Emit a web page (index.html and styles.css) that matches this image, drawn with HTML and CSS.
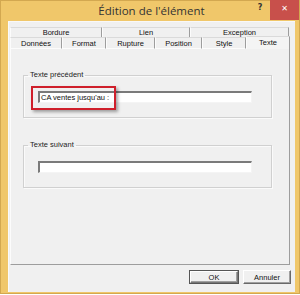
FILE: index.html
```html
<!DOCTYPE html>
<html>
	<head>
		<meta charset="utf-8" />
		<title>Édition de l'élément</title>
		<link rel="stylesheet" href="styles.css">
	</head>
	<body>
		<div class="window">
			<div class="titlebar">
				<span></span>
				<span class="title">Édition de l'élément</span>
				<div class="controls">
					<span class="help">?</span>
					<span class="close">✕</span>
				</div>
			</div>
			<div class="client">
				<!-- onglets -->
				<div class="tabs">
					<div class="row row-back">
						<span class="tab w92">Bordure</span>
						<span class="tab w88">Lien</span>
						<span class="tab w99">Exception</span>
					</div>
					<div class="row row-front">
						<span class="tab w52">Données</span>
						<span class="tab w44">Format</span>
						<span class="tab w49">Rupture</span>
						<span class="tab w47">Position</span>
						<span class="tab w44">Style</span>
						<span class="tab w44 active">Texte</span>
					</div>
				</div>
				<div class="panel">
					<fieldset class="group">
						<legend>Texte précédent</legend>
						<div class="field">
							<div class="edit">CA ventes jusqu'au :</div>
							<span class="mark"></span>
						</div>
					</fieldset>
					<fieldset class="group">
						<legend>Texte suivant</legend>
						<div class="field">
							<div class="edit"></div>
						</div>
					</fieldset>
				</div>
				<div class="buttons">
					<button class="btn default">OK</button>
					<button class="btn">Annuler</button>
				</div>
			</div>
		</div>
	</body>
</html>
```

FILE: styles.css
```css
*{
	margin: 0;
	padding: 0;
	box-sizing: border-box;
}

body{
	background: #fff;
	font-family: "Liberation Sans", Arial, sans-serif;
	font-size: 7.5px;
	color: #111;
}

.window{
	width: 300px;
	height: 294px;
	background: #f0c76a;
	border: 1px solid #d3a850;
	padding: 0 4px 1px 7px;
	display: flex;
	flex-direction: column;
}

.titlebar{
	height: 20px;
	display: grid;
	grid-template-columns: 1fr auto 1fr;
	align-items: start;
}

.title{
	font-family: "Open Sans", "Liberation Sans", sans-serif;
	font-size: 11.5px;
	color: #333;
	line-height: 20px;
	white-space: nowrap;
}

.controls{
	justify-self: end;
	display: flex;
	align-items: flex-start;
	margin-right: -4px;
	margin-top: -1px;
}

.help{
	font-family: "DejaVu Sans", sans-serif;
	font-weight: bold;
	font-size: 8px;
	color: #333;
	width: 20px;
	text-align: center;
	line-height: 16px;
}

.close{
	width: 29px;
	height: 20px;
	background: #c8504b;
	color: #fff;
	font-size: 8px;
	font-family: "DejaVu Sans", sans-serif;
	font-weight: bold;
	text-align: center;
	line-height: 18px;
}

.client{
	flex: 1;
	background: #f0f0f0;
	border-top: 1px solid #f8f8f8;
	border-left: 1px solid #fafafa;
	padding: 5px 4px 0 1px;
	display: flex;
	flex-direction: column;
}

/* onglets */
.row{
	display: flex;
}

.tab{
	display: flex;
	align-items: center;
	justify-content: center;
	background: #f0f0f0;
	border-top: 1px solid #dadada;
	border-left: 1px solid #fcfcfc;
	border-right: 1px solid #9d9d9d;
	white-space: nowrap;
}

.row-back .tab{
	height: 10px;
}

.row-front .tab{
	height: 12px;
	border-bottom: 1px solid #fcfcfc;
}

.row-front .tab.active{
	height: 13px;
	margin-top: -1px;
	border-bottom: none;
	background: #f4f4f4;
	padding-bottom: 2px;
}

.w92{ width: 92px; }
.w88{ width: 88px; }
.w99{ width: 99px; }
.w52{ width: 52px; }
.w49{ width: 49px; }
.w47{ width: 47px; }
.w44{ width: 44px; }

.panel{
	width: 280px;
	height: 216px;
	border-left: 1px solid #fcfcfc;
	border-right: 1px solid #9d9d9d;
	border-bottom: 1px solid #9d9d9d;
	padding: 22px 0 0 12px;
	display: flex;
	flex-direction: column;
	gap: 23px;
}

.group{
	width: 249px;
	border: 1px solid #d0d0d0;
	box-shadow: inset 1px 1px 0 #fafafa, 1px 1px 0 #fafafa;
	padding: 12px 0 14px 14px;
}

.group legend{
	margin-left: -10px;
	padding: 0 2px;
	line-height: 8px;
	color: #222;
}

.field{
	position: relative;
	width: 214px;
}

.edit{
	height: 12px;
	background: #fff;
	border-top: 2px solid #7a7a7a;
	border-left: 2px solid #7a7a7a;
	border-right: 1px solid #f4f4f4;
	border-bottom: 1px solid #f4f4f4;
	padding-left: 1px;
	line-height: 9px;
	white-space: nowrap;
}

.mark{
	position: absolute;
	left: -7px;
	top: -5px;
	width: 85px;
	height: 24px;
	border: 2px solid #cf1f2b;
	box-shadow: 2px 2px 3px rgba(0, 0, 0, 0.35);
}

/* boutons */
.buttons{
	display: flex;
	justify-content: flex-end;
	gap: 4px;
	margin-top: 5px;
}

.btn{
	height: 14px;
	font-family: "Liberation Sans", Arial, sans-serif;
	font-size: 7.5px;
	color: #111;
	background: #f0f0f0;
	border: 1px solid;
	border-color: #fff #696969 #696969 #fff;
	box-shadow: inset -1px -1px 0 #a0a0a0;
	width: 48px;
}

.btn.default{
	width: 50px;
	outline: 1px solid #555;
	outline-offset: -1px;
	border-width: 2px;
	border-color: #fff #777 #777 #fff;
}
```
